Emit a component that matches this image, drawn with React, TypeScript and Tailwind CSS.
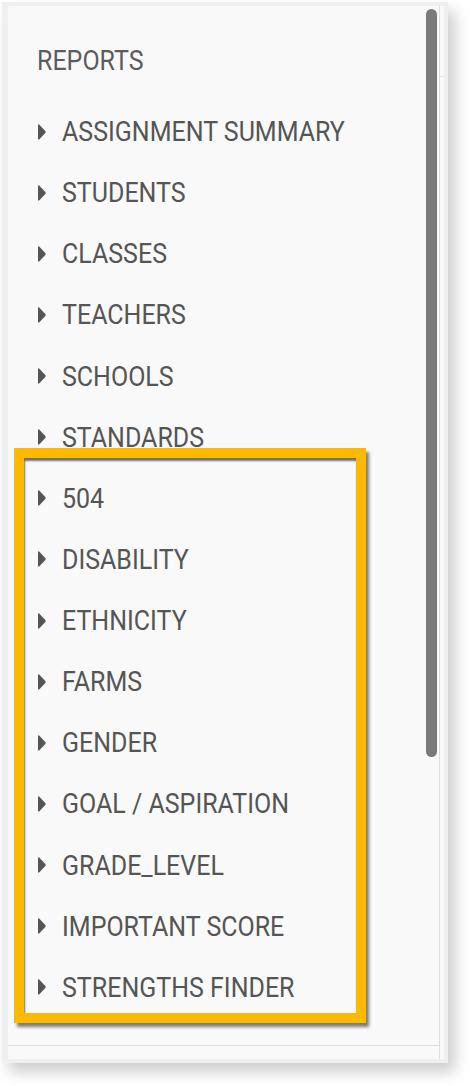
import React from 'react';

const reports = [
  'ASSIGNMENT SUMMARY',
  'STUDENTS',
  'CLASSES',
  'TEACHERS',
  'SCHOOLS',
  'STANDARDS',
  '504',
  'DISABILITY',
  'ETHNICITY',
  'FARMS',
  'GENDER',
  'GOAL / ASPIRATION',
  'GRADE_LEVEL',
  'IMPORTANT SCORE',
  'STRENGTHS FINDER',
];

function Caret() {
  return (
    <svg width="8" height="16" viewBox="0 0 8 16" className="shrink-0" aria-hidden>
      <path d="M1.4 0.7 L7.3 6.9 Q8 8 7.3 9.1 L1.4 15.3 Q0 16.3 0 14.6 L0 1.4 Q0 -0.3 1.4 0.7 Z" fill="#555555" />
    </svg>
  );
}

function ReportRow({ label }: { label: string }) {
  return (
    <div className="flex h-[61.14px] items-center pl-[30px]">
      <Caret />
      <span className="ml-[16px] inline-block origin-center scale-y-[1.1] text-[25px] leading-none text-[#555555]">
        {label}
      </span>
    </div>
  );
}

export default function App() {
  return (
    <div
      className="relative h-[1086px] w-[470px] overflow-hidden bg-white"
      style={{ fontFamily: 'Roboto, "Liberation Sans", Arial, sans-serif' }}
    >
      <div className="ml-[2px] mt-[2px] flex h-[1061px] w-[446px] border-b-[4px] border-l-[6px] border-r-[4px] border-t-[4px] border-[#efefef] bg-[#f9f9f9] shadow-[7px_9px_14px_rgba(0,0,0,0.2)]">
        <div className="flex w-[432px] flex-col border-r border-[#dddddd]">
          <div className="relative flex-1">
            <div className="absolute right-[2px] top-[3px] h-[748px] w-[11px] rounded-full bg-[#7a7a7a]" />
            <div className="mt-[23.5px] flex h-[61px] items-center pl-[29px]">
              <span className="inline-block origin-center scale-y-[1.1] text-[25px] leading-none text-[#5c5c5c]">
                REPORTS
              </span>
            </div>
            <div className="mt-[10.5px]">
              {reports.map((r) => (
                <ReportRow key={r} label={r} />
              ))}
            </div>
          </div>
          <div className="h-[14px] border-t border-[#dedede]" />
        </div>
        <div className="flex-1">
          <div className="h-[71px] border-b border-[#e6e6e6]" />
        </div>
      </div>

      <div className="absolute left-[14px] top-[448px] h-[575px] w-[352px] border-[10px] border-[#fcb900] shadow-[inset_1px_3px_2px_rgba(0,0,0,0.55),3px_4px_3px_rgba(0,0,0,0.5)]" />
    </div>
  );
}
